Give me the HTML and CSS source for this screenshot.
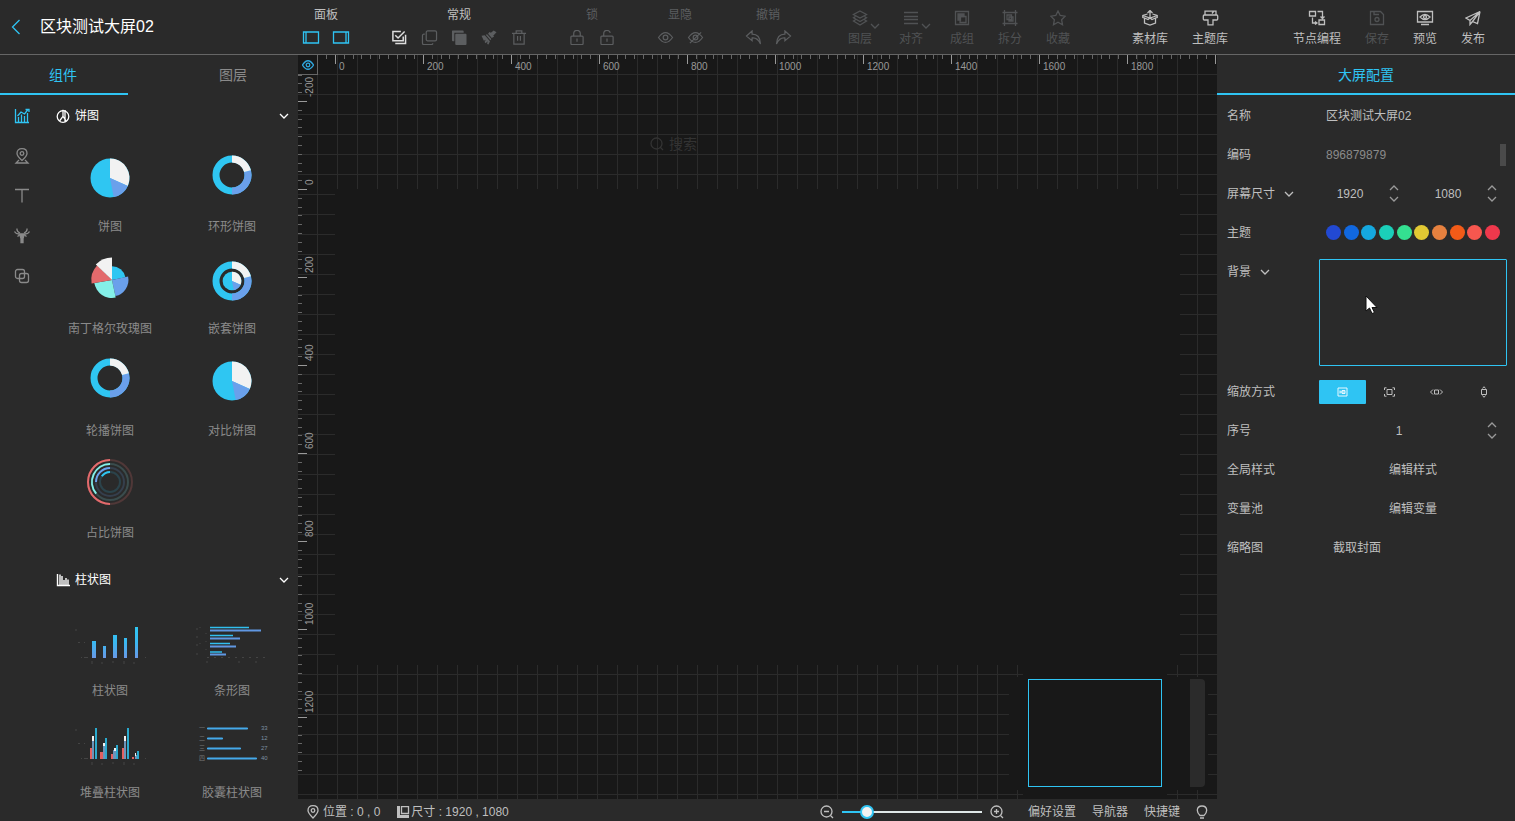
FILE: index.html
```
<!DOCTYPE html>
<html lang="zh-CN">
<head>
  <meta charset="UTF-8">
  <meta name="viewport" content="width=device-width, initial-scale=1.0">
  <title>区块测试大屏02</title>
  <link rel="stylesheet" href="styles.css">
</head>
<body>
  <header class="header">
    <div class="header-title">
      <button class="back" aria-label="返回"><svg width="10" height="16" viewBox="0 0 10 16"><path d="M8.500 1L1.500 8l7 7"/></svg></button>
      <h1>区块测试大屏02</h1>
    </div>
    <div class="tool-groups">
      <div class="group">
        <span class="group-name">面板</span>
        <div class="group-icons blue">
          <button aria-label="左侧面板"><svg width="18" height="15" viewBox="0 0 18 15"><path d="M1.500 2h15v11h-15zM4 2v11"/></svg></button>
          <button aria-label="右侧面板"><svg width="18" height="15" viewBox="0 0 18 15"><path d="M1.500 2h15v11h-15zM14 2v11"/></svg></button>
        </div>
      </div>
      <div class="group">
        <span class="group-name">常规</span>
        <div class="group-icons">
          <button class="on" aria-label="全选"><svg width="16" height="16" viewBox="0 0 16 16"><path stroke-width="1.600" d="M10 1.500H1.500v10h11V7M4 5.500l3 3 7-7M4 14.500h11V5"/></svg></button>
          <button aria-label="复制"><svg width="17" height="16" viewBox="0 0 16 16"><rect x="4.500" y="1" width="11" height="10.500" rx="1.500"/><path d="M3 4.500H2Q.5 4.500.5 6v8q0 1.500 1.500 1.500h8q1.500 0 1.500-1.500"/></svg></button>
          <button aria-label="粘贴"><svg class="solid" width="16" height="16" viewBox="0 0 16 16"><rect x="4" y="4" width="12" height="12" rx="1"/><path d="M1 .500h11q1 0 1 1V3H3v9H1.500q-1 0-1-1v-9.500q0-1 .5-1z"/></svg></button>
          <button aria-label="格式刷"><svg class="solid" width="16" height="16" viewBox="0 0 16 16"><path d="M13 .500l3 2-3.500 3.500 1 1-2.500 1.500-4-4.500L8.500 2l1.500 1zM6 4.500l4.500 5-1 1.500-5-6zM3.500 5.500l5.500 6.500-1.500 3.500-1.500-.5.5-3-2 2-1.200-1.200 1.200-2.300-2 1L0 6z"/></svg></button>
          <button aria-label="删除"><svg width="16" height="16" viewBox="0 0 16 16"><path d="M.5 3.500h15M5 3.500V1h6v2.500M2.500 3.500v11.500h11V3.500M6.500 6.500v5M9.500 6.500v5"/></svg></button>
        </div>
      </div>
      <div class="group off">
        <span class="group-name">锁</span>
        <div class="group-icons">
          <button aria-label="锁定"><svg width="16" height="16" viewBox="0 0 16 16"><rect x="1.500" y="6.500" width="13" height="9" rx="1"/><path d="M4.500 6.500V4q0-3.500 3.500-3.500T11.500 4v2.500M8 9v3.500"/></svg></button>
          <button aria-label="解锁"><svg width="16" height="16" viewBox="0 0 16 16"><rect x="1.500" y="6.500" width="13" height="9" rx="1"/><path d="M4.500 6.500V4q0-3.500 3.500-3.500Q11 .500 11.500 3M8 9v3.500"/></svg></button>
        </div>
      </div>
      <div class="group off">
        <span class="group-name">显隐</span>
        <div class="group-icons">
          <button aria-label="显示"><svg width="17" height="16" viewBox="0 0 16 16"><path d="M.500 8Q8-2.500 15.500 8 8 18.500.500 8z"/><circle cx="8" cy="8" r="2.500"/></svg></button>
          <button aria-label="隐藏"><svg width="17" height="16" viewBox="0 0 16 16"><path d="M.500 8Q8-2.500 15.500 8 8 18.500.500 8zM14 2.500L2 14"/><circle cx="8" cy="8" r="2.500"/></svg></button>
        </div>
      </div>
      <div class="group off">
        <span class="group-name">撤销</span>
        <div class="group-icons">
          <button aria-label="撤销"><svg width="17" height="16" viewBox="0 0 16 16"><path d="M6.500 1L.500 6.500l6 5V8.500q6-.500 9 6.500-.500-10.500-9-10.500z"/></svg></button>
          <button aria-label="重做"><svg width="17" height="16" viewBox="0 0 16 16"><path d="M9.500 1l6 5.500-6 5V8.500q-6-.500-9 6.500.500-10.500 9-10.500z"/></svg></button>
        </div>
      </div>
    </div>
    <div class="actions off">
      <button class="has-caret">
        <svg width="16" height="16" viewBox="0 0 16 16"><path d="M8 1l6.500 3.500L8 8 1.500 4.500zM3.500 6.500l-2 1.200L8 11.500l6.500-3.800-2-1.200M3.500 9.800l-2 1.200L8 15l6.500-4-2-1.200"/></svg>
        <span>图层</span>
        <svg class="caret" width="10" height="6" viewBox="0 0 10 6"><path d="M1 1l4 4 4-4"/></svg>
      </button>
      <button class="has-caret">
        <svg width="16" height="16" viewBox="0 0 16 16"><path d="M1 2.500h14M1 6.500h14M1 9.500h14M1 13.500h14"/></svg>
        <span>对齐</span>
        <svg class="caret" width="10" height="6" viewBox="0 0 10 6"><path d="M1 1l4 4 4-4"/></svg>
      </button>
      <button>
        <svg width="16" height="16" viewBox="0 0 16 16"><path d="M1.500 1.500h13v13h-13zM6.500 6.500h5.500v6H6z"/><path d="M4 4h6v2.500H6.500V10H4z" fill="currentColor"/></svg>
        <span>成组</span>
      </button>
      <button>
        <svg width="16" height="16" viewBox="0 0 16 16"><path d="M2.500 0v16M13.500 0v16M.500 2.500h15M.500 13.500h15M5 5h4.500v4.500H5zM7 7h4v4H7z"/></svg>
        <span>拆分</span>
      </button>
      <button>
        <svg width="16" height="16" viewBox="0 0 16 16"><path d="M8 1l2.200 4.500 5 .7-3.600 3.500.9 5L8 12.300 3.500 14.700l.9-5L.800 6.200l5-.7z"/></svg>
        <span>收藏</span>
      </button>
    </div>
    <div class="actions">
      <button>
        <svg width="16" height="16" viewBox="0 0 16 16"><path d="M5.500 4L.800 5.500v2L2.500 8v5L8 15l5.500-2V8l1.700-.5v-2L10.500 4M.800 5.500L8 8l7.200-2.500M8 8V1M5.500 3L8 .500 10.500 3M2.500 8L6 9.500 8 8l2 1.500L13.500 8"/></svg>
        <span>素材库</span>
      </button>
      <button>
        <svg width="17" height="16" viewBox="0 0 16 16"><path d="M2.500 5V1.200h11V5M1.800 5h12.400q1 0 1 1v3q0 1-1 1H10.500v4.800h-5V10H1.800q-1 0-1-1V6q0-1 1-1zM9.500 3.500l1.500-2"/></svg>
        <span>主题库</span>
      </button>
    </div>
    <div class="actions last">
      <button>
        <svg width="18" height="16" viewBox="0 0 18 16"><path d="M1.500 1.500h6v4.500h-6zM11 10h5.500v4.500H11zM9.500 1.500h5V8M4.500 7.500v5.500h4M7 11.500L9 13l-2 1.500M12.500 6.500l2 2 2-2"/></svg>
        <span>节点编程</span>
      </button>
      <button disabled>
        <svg width="16" height="16" viewBox="0 0 16 16"><path d="M1.500 1.500h10l3 3v10h-13zM5 1.500v3h5"/><circle cx="8" cy="9.500" r="2"/></svg>
        <span>保存</span>
      </button>
      <button>
        <svg width="18" height="16" viewBox="0 0 18 16"><path d="M1.500 1.500h15v10.500h-15zM5 14.500h8M4 7q5-5 10 0-5 5-10 0z"/><circle cx="9" cy="7" r="1.500"/></svg>
        <span>预览</span>
      </button>
      <button>
        <svg width="16" height="16" viewBox="0 0 16 16"><path d="M15 1.500L1 8l4 2.500zM15 1.500l-2.500 12-5-2zM5 10.500v4l2.500-3"/></svg>
        <span>发布</span>
      </button>
    </div>
  </header>

  <main class="main">
    <aside class="left">
      <nav class="tabs">
        <button class="tab active">组件</button>
        <button class="tab">图层</button>
      </nav>
      <div class="left-body">
        <nav class="rail">
          <button class="active" aria-label="图表"><svg width="16" height="16" viewBox="0 0 16 16"><path d="M1.500 1v13.500H15M4.500 14V9M7.500 14V6.500M10.500 14V8M13.500 14V5M3.500 8l3.500-4 3.500 2L14 1.500M11.500 1.500H15V4"/></svg></button>
          <button aria-label="地图"><svg width="16" height="16" viewBox="0 0 16 16"><path d="M8 12.500Q3 8 3 5.500 3 .700 8 .700t5 4.800Q13 8 8 12.500zM5 12l-3 3h12l-3-3"/><circle cx="8" cy="5.500" r="1.800"/></svg></button>
          <button aria-label="文本"><svg width="16" height="16" viewBox="0 0 16 16"><path d="M1 1.500h14M8 1.500v13"/></svg></button>
          <button aria-label="素材"><svg width="16" height="16" viewBox="0 0 16 16"><path d="M3 .500q-.5 3 3 4.500M13 .500q.5 3-3 4.500M.500 3.500Q2 6 5 6M15.500 3.500Q14 6 11 6M3.500 8.500L5.500 7M12.500 8.500L10.500 7"/><path fill="currentColor" d="M5.500 6h5l-1.500 4.500v4H7v-4z"/></svg></button>
          <button aria-label="其他"><svg width="16" height="16" viewBox="0 0 16 16"><rect x="1.500" y="1.500" width="9" height="9" rx="2"/><rect x="5.500" y="5.500" width="9" height="9" rx="2"/></svg></button>
        </nav>
        <div class="widgets">
          <section>
            <h2 class="category">
              <svg width="14" height="14" viewBox="0 0 14 14"><circle cx="7" cy="7.500" r="5.800"/><path d="M7 .800v6.500L3.500 12M7 7.300l3.500 5M9 1v12" /></svg>
              <span>饼图</span>
              <svg class="arrow" width="10" height="6" viewBox="0 0 10 6"><path d="M1 1l4 4 4-4"/></svg>
            </h2>
            <ul class="grid">
              <li>
                <svg class="thumb" viewBox="0 0 110 82"><g transform="translate(55 43)"><circle r="19.500" fill="#2fc6f2"/><path fill="#f2f2f2" d="M0 0V-19.500A19.500 19.500 0 0 1 17.800 7.900z"/><path fill="#6aa0eb" d="M0 0L17.800 7.900A19.500 19.500 0 0 1 3.700 19.100z"/></g></svg>
                <span>饼图</span>
              </li>
              <li>
                <svg class="thumb" viewBox="0 0 110 82"><g transform="translate(55 40)" fill="none" stroke-width="7"><circle r="16" stroke="#2fc6f2"/><path stroke="#6aa0eb" d="M15.500-3.900A16 16 0 0 1 0 16"/><path stroke="#f2f2f2" d="M0-16A16 16 0 0 1 15.500-3.900"/></g></svg>
                <span>环形饼图</span>
              </li>
              <li>
                <svg class="thumb" viewBox="0 0 110 82"><g transform="translate(57 43)"><path fill="#2fc6f2" d="M0 0V-13.700A13.700 13.700 0 0 1 13.400-2.800z"/><path fill="#6aa0eb" d="M0 0L16.100-3.400A16.500 16.500 0 0 1 3.400 16.100z"/><path fill="#84f0e8" d="M0 0L3.700 17.600A18 18 0 0 1-17.700 3.100z"/><path fill="#e36a6c" d="M0 0L-20.400 3.600A20.700 20.700 0 0 1-14.900-14.400z"/><path fill="#f2f2f2" d="M0 0L-16.200-15.600A22.500 22.500 0 0 1 0-22.500z"/></g></svg>
                <span>南丁格尔玫瑰图</span>
              </li>
              <li>
                <svg class="thumb" viewBox="0 0 110 82"><g transform="translate(55 44)"><g fill="none" stroke-width="7"><circle r="16" stroke="#2fc6f2"/><path stroke="#6aa0eb" d="M15.500-3.900A16 16 0 0 1 0 16"/><path stroke="#f2f2f2" d="M0-16A16 16 0 0 1 15.500-3.900"/></g><g transform="scale(.48)"><circle r="19.500" fill="#2fc6f2"/><path fill="#f2f2f2" d="M0 0V-19.500A19.500 19.500 0 0 1 17.800 7.900z"/><path fill="#6aa0eb" d="M0 0L17.800 7.900A19.500 19.500 0 0 1 3.700 19.100z"/></g></g></svg>
                <span>嵌套饼图</span>
              </li>
              <li>
                <svg class="thumb" viewBox="0 0 110 82"><g transform="translate(55 39)" fill="none" stroke-width="7"><circle r="16" stroke="#2fc6f2"/><path stroke="#6aa0eb" d="M15.500-3.900A16 16 0 0 1 0 16"/><path stroke="#f2f2f2" d="M0-16A16 16 0 0 1 15.500-3.900"/></g></svg>
                <span>轮播饼图</span>
              </li>
              <li>
                <svg class="thumb" viewBox="0 0 110 82"><g transform="translate(55 42)"><circle r="19.500" fill="#2fc6f2"/><path fill="#f2f2f2" d="M0 0V-19.500A19.500 19.500 0 0 1 17.800 7.900z"/><path fill="#6aa0eb" d="M0 0L17.800 7.900A19.500 19.500 0 0 1 3.700 19.100z"/></g></svg>
                <span>对比饼图</span>
              </li>
              <li>
                <svg class="thumb" viewBox="0 0 110 82"><g transform="translate(55 41)" fill="none" stroke-width="2"><circle r="22" stroke="#503838"/><circle r="18" stroke="#3a4c4d"/><circle r="14" stroke="#353f4d"/><circle r="10" stroke="#2b434b"/><path stroke="#e36a6c" d="M0 22A22 22 0 0 1 0-22"/><path stroke="#84f0e8" d="M-13.800 11.600A18 18 0 0 1 0-18"/><path stroke="#6aa0eb" d="M-14 0A14 14 0 0 1 0-14"/><path stroke="#2fc6f2" d="M-8.200-5.700A10 10 0 0 1 0-10"/></g></svg>
                <span>占比饼图</span>
              </li>
            </ul>
          </section>
          <section>
            <h2 class="category">
              <svg width="14" height="14" viewBox="0 0 14 14"><path d="M1.500 1v11.500H14M4 1.500V12M6 3v9M8 7v5M10 5v7M12 6.500V12" stroke-width="1.400"/></svg>
              <span>柱状图</span>
              <svg class="arrow" width="10" height="6" viewBox="0 0 10 6"><path d="M1 1l4 4 4-4"/></svg>
            </h2>
            <ul class="grid">
              <li>
                <svg class="thumb" viewBox="0 0 110 82">
                  <defs><linearGradient id="bar" x1="0" y1="28" x2="0" y2="59" gradientUnits="userSpaceOnUse"><stop offset="0" stop-color="#2fc6f2"/><stop offset=".5" stop-color="#3ab8f0"/><stop offset="1" stop-color="#6a98e6"/></linearGradient></defs>
                  <path class="axis" d="M21 30v2M23 43.500h2M29 43.500h1M26 58.500h1M29 58.500h4M37 62v3M47 63v2M58 62v2M69 62v3M79 63v2M90 58.500h1"/>
                  <path fill="url(#bar)" d="M37 42h4v17h-4zM48 47h3v12h-3zM58 36h4v23h-4zM69 39h3v20h-3zM80 28h3v31h-3z"/>
                </svg>
                <span>柱状图</span>
              </li>
              <li>
                <svg class="thumb" viewBox="0 0 110 82">
                  <path class="axis" d="M19 30h2M23 28v1M20 37v2M19 46h2M23 44v1M20 54v2M29 34v1M29 42v1M29 50v1M30 58.500h62M30 62v2M62 62v2M79 62v2" stroke-dasharray="2 5"/>
                  <path stroke="#31bff0" stroke-width="1.500" d="M33 28.500h39M33 36.500h23M33 44.500h20M33 53h12"/>
                  <path stroke="#6097e2" stroke-width="2" d="M33 31.500h51M33 39.500h30M33 47.500h26M33 55.500h16"/>
                </svg>
                <span>条形图</span>
              </li>
              <li>
                <svg class="thumb" viewBox="0 0 110 82">
                  <path class="axis" d="M21 28v2M23 42.500h2M29 42.500h1M26 57.500h1M29 57.500h4M37 61v3M47 62v2M58 61v2M69 61v3M79 62v2M90 57.500h1"/>
                  <path fill="#e3605f" d="M35 47h2v11h-2zM45 51h3v7h-3zM56 53h3v5h-3zM67 47h2v11h-2zM77 56h2v2h-2z"/>
                  <path fill="#6b93b8" d="M37 39h2v19h-2zM48 44h2v14h-2zM58 49h3v9h-3zM69 39h2v19h-2zM80 54h2v4h-2z"/>
                  <path fill="#f2f2f2" d="M37 35h2v5h-2zM48 42h2v3h-2zM59 47h2v3h-2zM69 35h2v5h-2zM80 52h1v3h-1z"/>
                  <path fill="#2aa9cd" d="M40 27h2v31h-2zM50 37h2v21h-2zM61 44h2v14h-2zM72 27h2v31h-2zM82 50h2v8h-2z"/>
                </svg>
                <span>堆叠柱状图</span>
              </li>
              <li>
                <svg class="thumb capsule" viewBox="0 0 110 82">
                  <path stroke="#45a9ea" stroke-width="2.200" stroke-linecap="round" d="M31 27.500h39M31 37.500h14M31 47.500h32M31 57.500h48"/>
                  <text x="22" y="29">一</text><text x="22" y="39">二</text><text x="22" y="49">三</text><text x="22" y="59">四</text>
                  <text class="num" x="84" y="29">33</text><text class="num" x="84" y="39">12</text><text class="num" x="84" y="49">27</text><text class="num" x="84" y="59">40</text>
                </svg>
                <span>胶囊柱状图</span>
              </li>
            </ul>
          </section>
        </div>
      </div>
    </aside>

    <section class="center">
      <div class="canvas">
        <div class="screen"></div>
        <div class="search"><svg width="14" height="14" viewBox="0 0 14 14"><circle cx="6.500" cy="6.500" r="5.500"/><path d="M10 10l3 3"/></svg>搜索</div>
        <button class="corner" aria-label="显示标尺"><svg width="12" height="10" viewBox="0 0 12 10"><path d="M.500 5Q6-3.500 11.500 5 6 13.500.500 5z"/><circle cx="6" cy="5" r="1.800"/></svg></button>
        <div class="ruler-x">
          <svg class="ticks" width="100%" height="10">
            <defs><pattern id="ticks-x" width="88" height="10" patternUnits="userSpaceOnUse" patternTransform="translate(17 0)"><path fill="#999" d="M0 0h1v9H0z"/><path fill="#666" d="M9 0h1v4H9zM18 0h1v4h-1zM26 0h1v4h-1zM35 0h1v4h-1zM44 0h1v4h-1zM53 0h1v4h-1zM62 0h1v4h-1zM70 0h1v4h-1zM79 0h1v4h-1z"/></pattern></defs>
            <rect width="100%" height="10" fill="url(#ticks-x)"/>
          </svg>
          <div class="marks"><span>0</span><span>200</span><span>400</span><span>600</span><span>800</span><span>1000</span><span>1200</span><span>1400</span><span>1600</span><span>1800</span></div>
        </div>
        <div class="ruler-y">
          <svg class="ticks" width="9" height="100%">
            <defs><pattern id="ticks-y" width="9" height="88" patternUnits="userSpaceOnUse" patternTransform="translate(0 26)"><path fill="#999" d="M0 0h9v1H0z"/><path fill="#666" d="M0 9h4v1H0zM0 18h4v1H0zM0 26h4v1H0zM0 35h4v1H0zM0 44h4v1H0zM0 53h4v1H0zM0 62h4v1H0zM0 70h4v1H0zM0 79h4v1H0z"/></pattern></defs>
            <rect width="9" height="100%" fill="url(#ticks-y)"/>
          </svg>
          <div class="marks"><span>-200</span><span>0</span><span>200</span><span>400</span><span>600</span><span>800</span><span>1000</span><span>1200</span></div>
        </div>
        <div class="navigator">
          <div class="viewport"></div>
          <div class="handle"></div>
        </div>
      </div>
      <footer class="status">
        <span class="info"><svg width="12" height="14" viewBox="0 0 12 14"><path d="M6 13Q1 8 1 5.500 1 .700 6 .700t5 4.800Q11 8 6 13z"/><circle cx="6" cy="5.500" r="1.800"/></svg>位置 : 0 , 0</span>
        <span class="info"><svg width="13" height="12" viewBox="0 0 13 12"><path fill="currentColor" stroke="none" d="M0 0h3v12H0zM3 9h9v3H3z"/><path d="M4.500.500h7v7h-7z"/></svg>尺寸 : 1920 , 1080</span>
        <div class="zoom">
          <button aria-label="缩小"><svg width="14" height="14" viewBox="0 0 14 14"><circle cx="6.500" cy="6.500" r="5.500"/><path d="M4 6.500h5M10.500 10.500l2.500 2.500"/></svg></button>
          <input type="range" min="0" max="100" value="14" aria-label="缩放">
          <button aria-label="放大"><svg width="14" height="14" viewBox="0 0 14 14"><circle cx="6.500" cy="6.500" r="5.500"/><path d="M4 6.500h5M6.500 4v5M10.500 10.500l2.500 2.500"/></svg></button>
        </div>
        <div class="links">
          <button>偏好设置</button>
          <button>导航器</button>
          <button>快捷键</button>
          <button aria-label="提示"><svg width="12" height="14" viewBox="0 0 12 14"><path d="M4 10.500Q1.300 8 1.300 5.300 1.500 1 6 1t4.700 4.300Q10.700 8 8 10.500zM4 13h4"/></svg></button>
        </div>
      </footer>
    </section>

    <aside class="right">
      <h2 class="right-title">大屏配置</h2>
      <form class="form">
        <div class="row">
          <label for="name">名称</label>
          <input class="text" id="name" type="text" value="区块测试大屏02">
        </div>
        <div class="row">
          <label for="code">编码</label>
          <div class="code">
            <input class="text" id="code" type="text" value="896879879">
            <i class="thumb-bar"></i>
          </div>
        </div>
        <div class="row">
          <label for="width">屏幕尺寸<svg class="arrow" width="10" height="6" viewBox="0 0 10 6"><path d="M1 1l4 4 4-4"/></svg></label>
          <div class="sizes">
            <div class="number">
              <input id="width" type="text" value="1920">
              <div class="steps"><button type="button" aria-label="增加"><svg width="10" height="6" viewBox="0 0 10 6"><path d="M1 5l4-4 4 4"/></svg></button><button type="button" aria-label="减少"><svg width="10" height="6" viewBox="0 0 10 6"><path d="M1 1l4 4 4-4"/></svg></button></div>
            </div>
            <div class="number">
              <input type="text" value="1080" aria-label="高度">
              <div class="steps"><button type="button" aria-label="增加"><svg width="10" height="6" viewBox="0 0 10 6"><path d="M1 5l4-4 4 4"/></svg></button><button type="button" aria-label="减少"><svg width="10" height="6" viewBox="0 0 10 6"><path d="M1 1l4 4 4-4"/></svg></button></div>
            </div>
          </div>
        </div>
        <div class="row">
          <span class="label">主题</span>
          <div class="theme"><i class="c1"></i><i class="c2"></i><i class="c3"></i><i class="c4"></i><i class="c5"></i><i class="c6"></i><i class="c7"></i><i class="c8"></i><i class="c9"></i><i class="c10"></i></div>
        </div>
        <div class="row row-bg">
          <span class="label">背景<svg class="arrow" width="10" height="6" viewBox="0 0 10 6"><path d="M1 1l4 4 4-4"/></svg></span>
          <div class="bg-box">
            <svg class="cursor" width="14" height="20" viewBox="0 0 14 20"><path d="M1 1v15l3.500-3 2.500 5.500 2.500-1L7 12.500h5z"/></svg>
          </div>
        </div>
        <div class="row">
          <span class="label">缩放方式</span>
          <div class="modes">
            <button type="button" class="active" aria-label="铺满"><svg width="11" height="10" viewBox="0 0 11 10"><path d="M1 1h9v8H1zM3 3.500v3M5 3.500h3v3H5zM3 5h5"/></svg></button>
            <button type="button" aria-label="等比"><svg width="11" height="10" viewBox="0 0 11 10"><path d="M3 2.500h5v5H3zM.500 3V.800h2M10.500 3V.800h-2M.500 7v2.200h2M10.500 7v2.200h-2"/></svg></button>
            <button type="button" aria-label="宽度铺满"><svg width="13" height="8" viewBox="0 0 13 8"><path d="M4.500 2h4v4h-4zM3 1.500L.500 4 3 6.500M10 1.500L12.500 4 10 6.500"/></svg></button>
            <button type="button" aria-label="高度铺满"><svg width="8" height="12" viewBox="0 0 8 12"><path d="M1.500 3.500h5v5h-5zM2.500 2.500L4 .700l1.500 1.800M2.500 9.500L4 11.300l1.500-1.800"/></svg></button>
          </div>
        </div>
        <div class="row">
          <label for="order">序号</label>
          <div class="number">
            <input id="order" type="text" value="1">
            <div class="steps"><button type="button" aria-label="增加"><svg width="10" height="6" viewBox="0 0 10 6"><path d="M1 5l4-4 4 4"/></svg></button><button type="button" aria-label="减少"><svg width="10" height="6" viewBox="0 0 10 6"><path d="M1 1l4 4 4-4"/></svg></button></div>
          </div>
        </div>
        <div class="row">
          <span class="label">全局样式</span>
          <button type="button">编辑样式</button>
        </div>
        <div class="row">
          <span class="label">变量池</span>
          <button type="button">编辑变量</button>
        </div>
        <div class="row">
          <span class="label">缩略图</span>
          <button type="button" class="shot">截取封面</button>
        </div>
      </form>
    </aside>
  </main>
</body>
</html>
```

FILE: styles.css
```
*{
  margin: 0;
  padding: 0;
  box-sizing: border-box;
}
html,body{
  height: 100%;
}
body{
  display: flex;
  flex-direction: column;
  overflow: hidden;
  background: #2a2a2a;
  color: #bfbfbf;
  font: 12px/18px "Liberation Sans", "Noto Sans CJK SC", sans-serif;
}
button,input{
  border: 0;
  outline: 0;
  background: none;
  color: inherit;
  font: inherit;
}
button{
  cursor: pointer;
}
svg{
  display: block;
  flex-shrink: 0;
  fill: none;
  stroke: currentColor;
  stroke-width: 1.3;
}
svg.solid{
  fill: currentColor;
  stroke: none;
}
svg.ticks{
  stroke: none;
}
li{
  list-style: none;
}

/* 顶部 */
.header{
  display: flex;
  flex-shrink: 0;
  height: 55px;
  padding-right: 18px;
  border-bottom: 1px solid #666;
}
.header-title{
  display: flex;
  align-items: center;
  gap: 19px;
  width: 296px;
  padding-left: 11px;
  color: #fff;
}
.header-title h1{
  font-size: 16px;
  line-height: 24px;
  font-weight: normal;
}
.back{
  color: #2fc4f3;
}
.tool-groups{
  display: flex;
  gap: 28px;
  margin-right: 38px;
}
.group{
  display: flex;
  flex-direction: column;
  align-items: center;
  gap: 6px;
  padding-top: 6px;
}
.group-icons{
  display: flex;
  color: #5c5e60;
}
.group-icons button{
  display: flex;
  justify-content: center;
  width: 30px;
}
.group-icons svg{
  height: 15px;
}
.group-icons.blue{
  color: #2fc4f3;
}
.group-icons .on{
  color: #ddd;
}
.off{
  color: #5c5e60;
}
.actions{
  display: flex;
  margin-right: 38px;
}
.actions.off{
  color: #505254;
}
.actions.last{
  margin-left: auto;
  margin-right: 0;
}
.actions button{
  position: relative;
  display: flex;
  flex-direction: column;
  align-items: center;
  gap: 4px;
  padding: 10px 12px 0;
}
.actions button:disabled{
  color: #505254;
}
.actions .has-caret{
  padding-right: 15px;
}
.caret{
  position: absolute;
  right: 7px;
  top: 23px;
}

.main{
  display: flex;
  flex: 1;
  min-height: 0;
}

/* 左侧组件 */
.left{
  display: flex;
  flex-direction: column;
  flex-shrink: 0;
  width: 298px;
}
.tabs{
  display: flex;
  justify-content: space-between;
  flex-shrink: 0;
  height: 40px;
}
.tab{
  width: 128px;
  padding: 2px 2px 0 0;
  border-bottom: 2px solid transparent;
  color: #8a8a8a;
  font-size: 14px;
}
.tab.active{
  border-color: #2fc4f3;
  color: #2fc4f3;
}
.left-body{
  display: flex;
  flex: 1;
  min-height: 0;
}
.rail{
  display: flex;
  flex-direction: column;
  width: 44px;
  padding-top: 1px;
  color: #8a8a8a;
}
.rail button{
  display: flex;
  align-items: center;
  justify-content: center;
  height: 40px;
}
.rail .active{
  color: #2fc4f3;
}
.widgets{
  flex: 1;
  overflow: hidden;
  padding: 0 5px;
}
.widgets section{
  margin-bottom: 16px;
}
.category{
  display: flex;
  align-items: center;
  gap: 5px;
  height: 40px;
  padding: 2px 4px 0 7px;
  color: #fff;
  font-size: 12px;
  font-weight: normal;
}
.category .arrow{
  margin-left: auto;
}
.grid{
  display: grid;
  grid-template-columns: 1fr 1fr;
  grid-auto-rows: 102px;
}
.grid li{
  display: flex;
  flex-direction: column;
  align-items: center;
  gap: 1px;
  color: #8a8a8a;
}
.thumb{
  width: 110px;
  height: 82px;
  stroke: none;
}
.thumb .axis{
  stroke: #444;
  stroke-width: 1;
}
.capsule text{
  fill: #777;
  font-size: 6px;
}
.capsule .num{
  fill: #7c8fa0;
}

/* 画布 */
.center{
  display: flex;
  flex-direction: column;
  flex: 1;
  min-width: 0;
}
.canvas{
  position: relative;
  flex: 1;
  overflow: hidden;
  background-color: #181818;
  background-image: linear-gradient(#2b2b2b 1px, transparent 1px), linear-gradient(90deg, #2b2b2b 1px, transparent 1px);
  background-size: 20px 20px;
  background-position: 19px 19px;
}
.screen{
  position: absolute;
  left: 37px;
  top: 134px;
  width: 845px;
  height: 476px;
  background: #181818;
}
.search{
  position: absolute;
  left: 352px;
  top: 80px;
  display: flex;
  align-items: center;
  gap: 5px;
  color: #333;
  font-size: 14px;
}
.corner{
  position: absolute;
  left: 0;
  top: 0;
  display: flex;
  align-items: center;
  justify-content: center;
  width: 20px;
  height: 20px;
  border-right: 1px solid #666;
  border-bottom: 1px solid #666;
  background: #181818;
  color: #2fa8e0;
}
.ruler-x,.ruler-y{
  position: absolute;
  overflow: hidden;
  color: #999;
  font-size: 10px;
}
.ruler-x{
  left: 20px;
  right: 0;
  top: 0;
  height: 19px;
}
.ruler-y{
  left: 0;
  top: 20px;
  bottom: 20px;
  display: flex;
  width: 19px;
}
.marks{
  display: flex;
  line-height: 10px;
}
.ruler-x .marks{
  margin-top: -3px;
  padding-left: 17px;
}
.ruler-x span{
  flex-shrink: 0;
  width: 88px;
  padding-left: 4px;
}
.ruler-y .marks{
  flex-direction: column;
  margin-top: -62px;
  margin-left: -2px;
}
.ruler-y span{
  flex-shrink: 0;
  height: 88px;
  padding-top: 4px;
  writing-mode: vertical-rl;
  transform: rotate(180deg);
}
.navigator{
  position: absolute;
  right: 9px;
  bottom: 9px;
  display: flex;
  justify-content: flex-end;
  gap: 28px;
  width: 199px;
  height: 113px;
  padding: 2px 3px 3px 0;
  background: #181818;
}
.viewport{
  width: 134px;
  border: 1px solid #2fc4f3;
  box-shadow: 0 -9px 0 5px #181818, 0 9px 0 5px #181818;
}
.handle{
  width: 15px;
  border-radius: 0 4px 4px 0;
  background: #2b2b2b;
}

.status{
  display: flex;
  align-items: center;
  flex-shrink: 0;
  height: 22px;
  padding: 3px 9px 0;
}
.info{
  display: flex;
  align-items: center;
  gap: 4px;
  margin-right: 17px;
}
.info + .info{
  gap: 1px;
}
.zoom{
  display: flex;
  align-items: center;
  gap: 8px;
  margin-left: auto;
}
.zoom input{
  width: 140px;
  height: 14px;
  appearance: none;
}
.zoom input::-webkit-slider-runnable-track{
  height: 2px;
  background: linear-gradient(90deg, #2fc4f3 18%, #dfe8e8 18%);
}
.zoom input::-webkit-slider-thumb{
  width: 14px;
  height: 14px;
  margin-top: -6px;
  border: 2px solid #2fc4f3;
  border-radius: 50%;
  background: #f2f2f2;
  appearance: none;
}
.links{
  display: flex;
  align-items: center;
  gap: 16px;
  margin-left: 24px;
}

/* 右侧配置 */
.right{
  flex-shrink: 0;
  width: 298px;
}
.right-title{
  height: 40px;
  border-bottom: 2px solid #2fc4f3;
  color: #2fc4f3;
  font-size: 14px;
  font-weight: normal;
  line-height: 40px;
  text-align: center;
}
.form{
  padding: 1px 8px 0 10px;
}
.row{
  display: grid;
  grid-template-columns: 92px 1fr;
  align-items: center;
  min-height: 39px;
}
.row label,.label{
  display: flex;
  align-items: center;
  gap: 9px;
}
.row input{
  width: 100%;
  min-width: 0;
}
.row input.text{
  padding-left: 7px;
}
.code{
  display: flex;
  color: #8a8a8a;
}
.thumb-bar{
  flex-shrink: 0;
  width: 6px;
  height: 22px;
  margin-right: 1px;
  background: #4a4a4a;
}
.sizes{
  display: flex;
  gap: 8px;
}
.number{
  display: flex;
  align-items: center;
}
.number input{
  text-align: center;
}
.steps{
  display: flex;
  flex-direction: column;
  gap: 5px;
  flex-shrink: 0;
  width: 28px;
  padding-left: 8px;
  color: #999;
}
.theme{
  display: flex;
  justify-content: space-between;
  padding: 0 7px;
}
.theme i{
  width: 15px;
  height: 15px;
  border-radius: 50%;
}
.c1{ background: #2249d2; }
.c2{ background: #1168e0; }
.c3{ background: #15a8df; }
.c4{ background: #1bcfb9; }
.c5{ background: #34e091; }
.c6{ background: #e2c933; }
.c7{ background: #e6813f; }
.c8{ background: #f25b18; }
.c9{ background: #f7574f; }
.c10{ background: #ef384c; }
.row-bg{
  align-items: start;
  padding: 7px 0 6px;
}
.row-bg .label{
  padding-top: 4px;
}
.bg-box{
  position: relative;
  height: 107px;
  border: 1px solid #2fc4f3;
  border-radius: 1px;
}
.cursor{
  position: absolute;
  left: 45px;
  top: 35px;
  fill: #fff;
  stroke: #111;
  stroke-width: 1;
}
.modes{
  display: flex;
}
.modes svg{
  stroke-width: 1;
}
.modes button{
  display: flex;
  flex: 1;
  align-items: center;
  justify-content: center;
  height: 24px;
  border-radius: 1px;
}
.modes .active{
  background: #2fc4f3;
  color: #e8f8ff;
}
.shot{
  justify-self: start;
  padding-left: 14px;
}
```
